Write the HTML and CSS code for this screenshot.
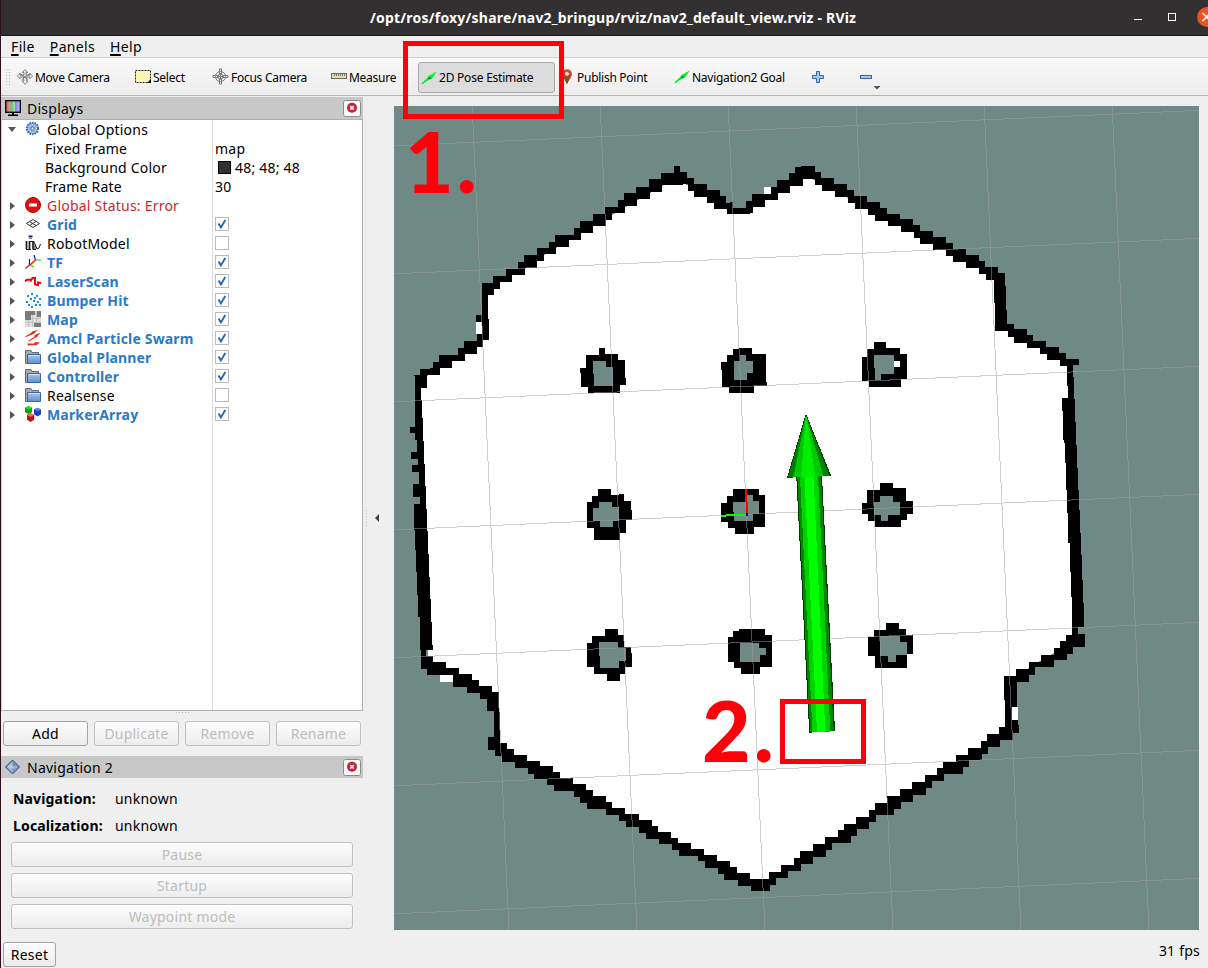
FILE: index.html
```html
<!DOCTYPE html>
<html lang="en">
<head>
<meta charset="utf-8">
<title>RViz</title>
<link rel="stylesheet" href="styles.css">
</head>
<body>
<svg class="defs" width="0" height="0">
  <defs>
    <linearGradient id="scr" x1="0" x2="1" y1="0" y2="0"><stop offset="0" stop-color="#c4544f"/><stop offset=".3" stop-color="#d9a59d"/><stop offset=".35" stop-color="#5cc26a"/><stop offset=".62" stop-color="#a8dcae"/><stop offset=".68" stop-color="#7d7dea"/><stop offset="1" stop-color="#c9c9f8"/></linearGradient>
    <linearGradient id="fold" x1="0" x2="0" y1="0" y2="1"><stop offset="0" stop-color="#a9c6ea"/><stop offset="1" stop-color="#5e92cf"/></linearGradient>
    <linearGradient id="pin" x1="0" x2="0" y1="0" y2="1"><stop offset="0" stop-color="#f0502e"/><stop offset="1" stop-color="#6b3a22"/></linearGradient>
    <symbol id="i-folder" viewBox="0 0 16 16"><path d="M.5 14.500V1.500h5.500l1 2h6.500v11z" fill="#a8a8a8" stroke="#6b6b6b"/><path d="M2.500 5.500h13v9h-13z" fill="url(#fold)" stroke="#3465a4"/><path d="M3.500 6.500h11" stroke="#d3e3f6"/></symbol>
    <symbol id="i-check" viewBox="0 0 14 14"><rect x=".5" y=".5" width="13" height="13" fill="#fff" stroke="#bbb"/><path d="M3.600 6.500 5.900 10.400 10.300 3" fill="none" stroke="#2a66ad" stroke-width="1.900"/></symbol>
    <symbol id="i-box" viewBox="0 0 14 14"><rect x=".5" y=".5" width="13" height="13" fill="#fff" stroke="#bbb"/></symbol>
    <symbol id="i-arrow" viewBox="0 0 16 14"><path d="M.3 12.600 6.500 6.800 7 5.300 15.800.6 11 7.600 8.500 8.300 1.300 13.200z" fill="#00f02c"/><path d="M6.500 7l4-.8-2 2.200z" fill="#087a1c"/></symbol>
    <symbol id="i-close" viewBox="0 0 18 17"><rect x=".5" y=".5" width="17" height="16" rx="2" fill="#fafafa" stroke="#8c8c8c"/><circle cx="9" cy="7.800" r="5" fill="#c81e3a"/><path d="M7.200 6 10.800 9.600M10.800 6 7.200 9.600" stroke="#fff" stroke-width="1.500"/></symbol>
  </defs>
</svg>
<div class="window">
  <header class="titlebar">
    <span class="title">/opt/ros/foxy/share/nav2_bringup/rviz/nav2_default_view.rviz - RViz</span>
    <svg class="controls" width="80" height="36"><path d="M6 19.500h8" stroke="#fff"/><rect x="40.500" y="13.500" width="7" height="7" fill="none" stroke="#fff"/><circle cx="79" cy="17" r="10" fill="#e95420"/><path d="M74.500 13 82.500 21M82.500 13 74.500 21" stroke="#fff" stroke-width="1.600"/></svg>
  </header>
  <nav class="menubar"><span><u>F</u>ile</span><span><u>P</u>anels</span><span><u>H</u>elp</span></nav>
  <div class="toolbar">
    <svg class="grip" width="5" height="18"><path d="M.5 1v17M3.500 1v17" stroke="#b5b5b5" stroke-dasharray="1 2"/></svg>
    <div class="tool w-move"><svg width="16" height="16" viewBox="0 0 16 16" fill="#f5f5f5" stroke="#6e6e6e" stroke-width=".9"><path d="M8 .7 10.800 3.400H9v2.800h4V4.500L15.600 7 13 9.600V8H9.300v4H11L8 15.300 5 12h1.700V8H3v1.600L.4 7 3 4.500v1.700h4V3.400H5.200z"/><path d="M3 4.500 8 8 13 4.500M4.500 11 8 8l3.500 3" fill="none"/></svg><span>Move Camera</span></div>
    <div class="tool w-select"><svg width="16" height="14" viewBox="0 0 16 14"><rect x=".5" y=".5" width="15" height="12" fill="#fdf3b4" stroke="#222" stroke-dasharray="2 1"/><path d="M16 9v4h-4z"/></svg><span>Select</span></div>
    <div class="tool w-focus"><svg width="17" height="17" viewBox="0 0 17 17" fill="none" stroke="#777" stroke-width="1"><circle cx="8.500" cy="8.500" r="5"/><circle cx="8.500" cy="8.500" r="2.500"/><path d="M7.500 1h2v5h-2zM7.500 11h2v5h-2zM1 7.500h5v2H1zM11 7.500h5v2h-5zM8.500 6v5M6 8.500h5"/></svg><span>Focus Camera</span></div>
    <div class="tool w-measure"><svg width="16" height="7" viewBox="0 0 16 7"><rect x=".5" y=".5" width="15" height="5" fill="#e8dca0" stroke="#6e6a58"/><path d="M3.500 1v2M5.500 1v2M7.500 1v2M9.500 1v2M11.500 1v2M13.500 1v2" stroke="#777"/></svg><span>Measure</span></div>
    <div class="tool active"><svg width="16" height="14"><use href="#i-arrow"/></svg><span>2D Pose Estimate</span></div>
    <div class="tool w-point"><svg width="16" height="16" viewBox="0 0 16 16"><path d="M8 .3C4.500.3 3 2.800 3 5.200 3 8 6.500 10.500 8 15.700 9.500 10.500 13 8 13 5.200 13 2.800 11.500.3 8 .3z" fill="url(#pin)"/><circle cx="8" cy="4.800" r="1.900" fill="#fbeee8"/></svg><span>Publish Point</span></div>
    <div class="tool w-goal"><svg width="16" height="14"><use href="#i-arrow"/></svg><span>Navigation2 Goal</span></div>
    <svg class="plus" width="12" height="12"><path d="M4.500.5h3v4h4v3h-4v4h-3v-4h-4v-3h4z" fill="#a9c6ea" stroke="#3465a4"/></svg>
    <svg class="minus" width="20" height="26"><rect x=".5" y="11.500" width="11" height="3" fill="#a9c6ea" stroke="#3465a4"/><path d="M13.500 22h7l-3.500 3.500z" fill="#555"/></svg>
  </div>
  <div class="main">
    <aside class="dock">
      <div class="dock-head"><svg width="16" height="17" viewBox="0 0 16 17"><rect x=".7" y=".7" width="14.600" height="11.600" fill="url(#scr)" stroke="#111" stroke-width="1.400"/><path d="M7 12h2v2.500H7zM3 14.500h10v1.500H3z"/></svg><span>Displays</span><svg class="x" width="18" height="17"><use href="#i-close"/></svg></div>
      <div class="tree">
        <div class="row open"><i></i><svg width="16" height="16" viewBox="0 0 16 16"><circle cx="7.500" cy="7.500" r="5.600" fill="#8fb4e3" stroke="#3f71b2" stroke-width="2.200" stroke-dasharray="1.700 .8"/><circle cx="7.500" cy="7.500" r="4" fill="none" stroke="#dce9f8" stroke-dasharray="1 1"/><circle cx="7.500" cy="7.500" r="1.500" fill="#fff" stroke="#3465a4"/></svg><span class="name">Global Options</span></div>
        <div class="row sub"><span class="name">Fixed Frame</span><span class="val">map</span></div>
        <div class="row sub"><span class="name">Background Color</span><span class="val"><b class="swatch"></b>48; 48; 48</span></div>
        <div class="row sub"><span class="name">Frame Rate</span><span class="val">30</span></div>
        <div class="row error"><i></i><svg width="16" height="16" viewBox="0 0 16 16"><circle cx="8" cy="8" r="7.500" fill="#e01010" stroke="#a30808"/><rect x="4" y="6.500" width="8" height="3" fill="#fff"/></svg><span class="name">Global Status: Error</span></div>
        <div class="row on"><i></i><svg width="16" height="16" viewBox="0 0 16 16" fill="none" stroke="#333"><path d="M1.500 7.500 8 3.500l6.500 4L8 11.500zM4.500 5.500 11 9.500M11 5.500 4.500 9.500"/></svg><span class="name">Grid</span><svg class="val" width="14" height="14"><use href="#i-check"/></svg></div>
        <div class="row"><i></i><svg width="16" height="16" viewBox="0 0 16 16" fill="none" stroke="#1c1c1c"><path d="M3.500 1.500h4" stroke="#24247a" stroke-width="2"/><path d="M4 3.500h3" stroke="#888"/><path d="M1.500 6v8M4.500 6v9M8 6v8" stroke-width="1.700"/><path d="M4 6.500h5l1.500 4M10 9.500v5M10.500 10l1.500 4 2-1 1.500-4M1 14.500h5M7.500 14.500h3.500"/></svg><span class="name">RobotModel</span><svg class="val" width="14" height="14"><use href="#i-box"/></svg></div>
        <div class="row on"><i></i><svg width="16" height="16" viewBox="0 0 16 16" fill="none"><path d="M4.500 11 .5 14.500M10.500 6 5 11" stroke="#e01010" stroke-width="1.200"/><path d="M4.500 11V5M10.500 6 9 1" stroke="#1010e8" stroke-width="1.200"/><path d="M4.500 11 9 13M10.500 6h5.500" stroke="#08dc08" stroke-width="1.200"/><path d="M10 7.500 6 11.500" stroke="#eda30e"/></svg><span class="name">TF</span><svg class="val" width="14" height="14"><use href="#i-check"/></svg></div>
        <div class="row on"><i></i><svg width="16" height="16" viewBox="0 0 16 16"><path d="M0 8.500 1.500 7 5 6.500l1 1L7.500 5H10v6.500l3 .5V9.500l3 .500" fill="none" stroke="red" stroke-width="2"/></svg><span class="name">LaserScan</span><svg class="val" width="14" height="14"><use href="#i-check"/></svg></div>
        <div class="row on"><i></i><svg width="16" height="16" viewBox="0 0 16 16" fill="#168ef0"><path d="M6 1h2v2H6zM2 3h2v2H2zM11 3h2v2h-2zM5 6h2v2H5zM9 5h2v2H9zM14 6h2v2h-2zM1 9h2v2H1zM8 8h2v2H8zM12 9h2v2h-2zM3 12h2v2H3zM6 14h2v2H6zM10 12h2v2h-2zM14 12h2v2h-2z"/></svg><span class="name">Bumper Hit</span><svg class="val" width="14" height="14"><use href="#i-check"/></svg></div>
        <div class="row on"><i></i><svg width="16" height="16" viewBox="0 0 16 16"><path d="M0 0h16v16H0z" fill="#ddd"/><path d="M3.500 0v16M7.500 0v16M11.500 0v16M0 3.500h16M0 7.500h16M0 11.500h16" stroke="#b8b8b8" stroke-width=".7"/><path d="M0 0h10v4H6v5H0zM12 0h4v6h-4zM9 12h7v4H9z" fill="#7a7a7a"/></svg><span class="name">Map</span><svg class="val" width="14" height="14"><use href="#i-check"/></svg></div>
        <div class="row on"><i></i><svg width="16" height="16" viewBox="0 0 16 16" fill="#f02a18"><path d="M0 6.500 6 3 7 1.500 13 0 8.500 4 1 7zM3 11 9 7l1-2 5.500-2.500L12 7 9.500 8 4 11.500zM2 13.500 9 13.500l1.500-1.500L15 12.500l-4 3-2-.5-6 .5z"/></svg><span class="name">Amcl Particle Swarm</span><svg class="val" width="14" height="14"><use href="#i-check"/></svg></div>
        <div class="row on"><i></i><svg width="16" height="16"><use href="#i-folder"/></svg><span class="name">Global Planner</span><svg class="val" width="14" height="14"><use href="#i-check"/></svg></div>
        <div class="row on"><i></i><svg width="16" height="16"><use href="#i-folder"/></svg><span class="name">Controller</span><svg class="val" width="14" height="14"><use href="#i-check"/></svg></div>
        <div class="row"><i></i><svg width="16" height="16"><use href="#i-folder"/></svg><span class="name">Realsense</span><svg class="val" width="14" height="14"><use href="#i-box"/></svg></div>
        <div class="row on"><i></i><svg width="16" height="16" viewBox="0 0 16 16"><path d="M0 1.800 3.500 0 7 1.800v4.400L3.500 8 0 6.200z" fill="#07a507"/><path d="M0 1.800 3.500 0 7 1.800 3.500 3.600z" fill="#2be02b"/><path d="M9 3.500 12.500 1.700 16 3.500v4.700L12.500 10.500 9 8.200z" fill="#1d3fc0"/><path d="M9 3.500 12.500 1.700 16 3.500 12.500 5.300z" fill="#5b80f2"/><path d="M2 9 5.500 7.300 9.200 9v4.700L5.500 16 2 13.700z" fill="#c01212"/><path d="M2 9 5.500 7.300 9.200 9 5.500 11z" fill="#f26a5e"/></svg><span class="name">MarkerArray</span><svg class="val" width="14" height="14"><use href="#i-check"/></svg></div>
      </div>
      <div class="split"></div>
      <div class="actions"><button class="enabled">Add</button><button>Duplicate</button><button>Remove</button><button>Rename</button></div>
      <div class="split second"></div>
      <div class="dock-head"><svg width="16" height="17" viewBox="0 0 16 17"><path d="M7.500 1 14.500 8 7.500 15 .5 8z" fill="#7a92c2" stroke="#39496f"/><path d="M7.500 2.500V14L2 8z" fill="#a9bbdc"/><path d="M3 8h9M5 6l5 4" stroke="#d8e0f0" stroke-width=".7"/></svg><span>Navigation 2</span><svg class="x" width="18" height="17"><use href="#i-close"/></svg></div>
      <div class="status"><b>Navigation:</b><span>unknown</span><b>Localization:</b><span>unknown</span></div>
      <div class="stack"><button>Pause</button><button>Startup</button><button>Waypoint mode</button></div>
    </aside>
    <div class="collapse"><svg width="14" height="18"><path d="M.5 1v17" stroke="#bdbdbd" stroke-dasharray="1 2"/><path d="M13 5v8L9 9z" fill="#444"/></svg></div>
    <svg class="view" width="805" height="824" viewBox="394 106 805 824" shape-rendering="crispEdges">
      <rect x="394" y="106" width="805" height="824" fill="#6f8984"/>
      <!-- free space -->
      <path fill="#fff" d="M420 380 483 343 485 290 600 222 676 178 729 211 745 211 762 199 804 175 996 275 1000 326 1072 363 1072 450 1078 638 1009 680 1009 735 760 885 500 750 494 700 428 662z"/>
      <path fill="#fff" d="M476 321.700h6v12.600h-6zM764 187h7v7h-7zM440 675h14v7h-14zM1012 707.300h6v12.700h-6z"/>
      <!-- occupied cells -->
      <g>
        <path transform="translate(400 140) scale(.33333)" d="M45 900V708H42V706H60V687H90V683H99V665H117V645H174V625H192V603H231V583H228V582H246V545H228V525H245V430H279V408H318V387H354V366H372V345H411V324H447V306H465V285H522V264H540V243H579V222H615V201H654V180H672V159H708V140H747V118H783V98H823V77H840V96H861V113H882V131H921V149H960V167H978V188H999V204H1050V222H981V206H942V188H921V170H882V152H864V133H849V135H786V156H750V176H711V197H675V218H636V239H618V258H579V279H543V300H507V320H468V342H432V362H411V384H375V404H336V426H300V446H282V465H264V537H267V600H249V620H231V641H195V662H156V683H120V704H81V743H63V780H66V835H69V900z"/>
        <path transform="translate(730 140) scale(.33333)" d="M0 186H9V204H48V183H66V162H123V141H141V120H177V99H195V81H213V78H255V96H273V114H312V132H351V150H372V168H411V186H450V204H471V222H510V237H549V255H570V273H609V291H648V309H669V327H708V345H747V363H765V381H804V399H825V438H828V510H831V552H852V567H891V586H909V603H948V621H987V639H1008V657H1047V676H1029V711H1032V777H1035V847H1038V900H999V810H996V774H1014V738H1011V678H990V660H951V641H930V624H891V608H852V590H834V572H795V490H792V420H768V402H747V384H708V366H669V348H648V330H609V312H570V293H552V276H513V258H474V242H435V224H414V206H375V188H354V170H315V152H276V134H255V117H219V138H180V159H144V180H105V201H69V219H0z"/>
        <path transform="translate(400 400) scale(.33333)" d="M45 0H66V55H69V124H72V192H75V258H78V327H81V394H84V463H87V530H90V598H93V667H96V735H99V750H60V650H54V585H51V515H48V450H45V390H42V312H60V290H39V252H57V215H36V195H54V177H33V157H51V98H30V81H48V15H45z"/>
        <path transform="translate(730 400) scale(.33333)" d="M996 0H1035V67H1038V135H1041V205H1044V270H1047V330H1050V400H1053V465H1056V540H1059V610H1062V682H1044V702H1065V741H1029V762H1011V780H972V801H915V825H897V846H861V900H822V828H858V807H897V786H933V765H972V744H990V723H1008V705H1026V590H1023V515H1020V430H1014V340H1011V270H1008V190H1005V130H1002V65H999z"/>
        <path transform="translate(400 640) scale(.33333)" d="M60 0H96V15H99V30H78V49H99V67H138V84H177V102H216V120H237V138H276V156H297V215H300V310H321V328H342V345H381V363H420V379H459V397H480V415H519V433H558V451H579V469H618V487H636V504H675V522H717V540H756V558H774V576H813V594H834V610H873V628H912V646H951V664H990V682H1011V700H1050V717H1110V753H1053V738H1014V720H972V702H954V684H915V664H894V649H837V630H816V613H777V597H738V579H717V561H678V543H657V525H618V508H561V489H540V471H522V453H462V436H441V418H402V402H384V384H345V366H306V348H285V329H264V291H282V213H261V177H240V159H201V141H159V105H81V88H63V60z"/>
        <path transform="translate(740 640) scale(.33333)" d="M792 108H831V201H816V240H834V255H837V278H819V300H780V320H744V341H726V360H687V381H669V402H612V423H576V444H558V465H519V486H483V507H462V525H408V546H387V567H351V588H333V609H276V630H258V651H219V672H183V693H144V714H108V735H90V753H33V738H0V699H30V717H87V696H123V675H162V654H180V633H219V612H255V591H294V570H312V552H348V531H387V510H405V489H441V468H480V447H516V426H555V405H591V384H609V366H648V345H684V324H723V303H741V282H777V262H795V180H792z"/>
      </g>
      <!-- pillars -->
      <g transform="translate(560 330) scale(.33333)">
        <path d="M117 54H135V72H174V90H195V145H198V165H180V188H84V170H63V130H60V114H78V75H117zM537 54H576V72H618V156H621V168H582V190H507V172H486V120H483V96H501V75H519V57H537zM942 36H978V54H1020V72H1041V147H1023V170H927V153H906V80H921V57H942zM114 477H153V495H177V492H192V513H213V540H216V570H198V609H180V630H102V594H81V516H96V498H114zM519 477H597V495H615V590H582V612H525V594H504V575H483V519H501V498H519zM960 459H999V474H1038V513H1059V552H1041V570H1023V591H945V573H924V552H906V519H921V480H960zM135 897H174V915H192V952H213V970H216V1010H195V1032H180V1053H141V1033H102V1012H81V939H96V918H135zM537 897H615V915H636V1012H600V1033H543V1015H522V997H504V921H519V903H537zM978 879H1017V897H1038V915H1059V972H1041V1014H945V978H924V921H942V900H978z"/>
        <path fill="#6f8984" d="M99 93H138V111H159V168H102zM540 75H558V93H579V130H561V150H522V93H540zM942 75H1002V132H963V150H945zM117 516H156V531H177V573H159V591H120V573H99V534H117zM519 516H561V495H579V513H597V552H579V573H522zM960 498H999V516H1020V555H984V573H963V555H942V516H960zM117 936H174V955H198V993H177V1014H120zM540 939H597V954H618V975H600V996H540zM960 918H1020V936H1041V975H1008V996H984V978H960z"/>
        <path fill="#fff" d="M1002 93h18v18h-18z"/>
      </g>
      <!-- metric grid -->
      <path stroke="#a0a0a4" stroke-opacity=".5" fill="none" d="M394 145.800 1199 110.400M394 273.800 1199 238.400M394 401.800 1199 366.400M394 529.800 1199 494.400M394 657.800 1199 622.400M394 785.800 1199 750.400M394 913.800 1199 878.400M472.200 106 508.900 930M600.200 106 636.900 930M728.200 106 764.900 930M856.200 106 892.900 930M984.200 106 1020.900 930M1112.200 106 1148.900 930"/>
      <!-- origin axes -->
      <path d="M746 489.500 747 514" stroke="red" stroke-width="2"/><path d="M721 515.700 746 514.700" stroke="#0f0" stroke-width="2"/><path d="M746 513h2v3h-2z" fill="#00f"/>
      <!-- pose arrow -->
      <path d="M796.300 477 822 476 835 731 809.200 732.700z" fill="#003c00"/>
      <path d="M797.300 477 821 476 833.700 731 810.200 732.500z" fill="#008800"/>
      <path d="M800 477 818 476 830.300 731.800 812.500 732z" fill="#00d200"/>
      <path d="M804.500 477 813.500 476 825.300 731.800 817 732z" fill="#00ff00"/>
      <path d="M805.700 414 806.300 414 831 475.700 787 477.800z" fill="#003c00"/>
      <path d="M806 415 829.700 475.800 788.200 477.500z" fill="#008000"/>
      <path d="M806 415 823.500 476.200 793.300 477.500z" fill="#00c800"/>
      <path d="M806 415 815.500 477 801 477.300z" fill="#00ee00"/>
    </svg>
  </div>
  <footer class="statusbar"><button class="enabled">Reset</button><span>31 fps</span></footer>
  <div class="mark m1"></div><div class="mark m2"></div>
  <div class="num n1">1.</div><div class="num n2">2.</div>
</div>
</body>
</html>
```
FILE: styles.css
```css
* { box-sizing: border-box; }
body { margin: 0; font: 14px/19px "Noto Sans", "Open Sans", sans-serif; letter-spacing: .22px; color: #000; }
svg { display: block; flex: none; }
.defs { position: absolute; }
.window { position: relative; width: 1208px; height: 968px; overflow: hidden; display: flex; flex-direction: column; background: #efefef; border-left: 1px solid #2c0f1f; }
.titlebar { height: 36px; flex: none; background: #333031; border-bottom: 1px solid #1c1a1b; display: flex; align-items: center; justify-content: flex-end; }
.title { color: #fff; font-weight: 700; font-size: 14px; letter-spacing: .21px; width: 487px; white-space: nowrap; margin-right: 271px; }
.menubar { height: 22px; flex: none; border-bottom: 1px solid #d0d0d0; padding-left: 10px; display: flex; gap: 15px; line-height: 22px; letter-spacing: .35px; }
.menubar u { text-underline-offset: 2px; text-decoration-thickness: 2px; text-decoration-skip-ink: none; }
.toolbar { height: 38px; flex: none; background: linear-gradient(#f9f9f9, #ededed); border-bottom: 1px solid #b4b4b4; display: flex; align-items: center; }
.grip { margin: 0 6px 0 5px; }
.tool { display: flex; align-items: center; gap: 2px; font-size: 12px; letter-spacing: -.27px; white-space: nowrap; height: 31px; position: relative; }
.tool span { padding-top: 2px; }
.w-move { width: 118px; }
.w-select { width: 77px; }
.w-focus { width: 119px; }
.w-measure { width: 87px; }
.active { width: 137px; border: 1px solid #a8a8a8; border-radius: 3px; background: #dcdcdc; padding-left: 2px; margin-top: 2px; letter-spacing: -.22px; }
.active span { padding-top: 0; }
.w-point { width: 115px; margin-left: 4px; }
.w-goal { width: 138px; }
.plus { margin-right: 36px; }
.main { height: 838px; flex: none; display: flex; }
.dock { width: 362px; display: flex; flex-direction: column; padding-top: 1px; }
.dock-head { height: 22px; flex: none; background: #c8c8c8; display: flex; align-items: center; padding: 0 2px 0 4px; gap: 6px; letter-spacing: .25px; }
.dock-head .x { margin-left: auto; }
.tree { height: 592px; flex: none; background: #fff linear-gradient(#dcdcdc, #dcdcdc) 210px 0 / 1px 100% no-repeat; border: 1px solid #b0b0b0; border-left-color: #ccc; }
.row { display: grid; grid-template-columns: 23px 21px 168px 1fr; height: 19px; align-items: center; white-space: nowrap; }
.row i { margin-left: 8px; width: 0; height: 0; border: 4px solid transparent; border-left: 5px solid #555; border-right: 0; }
.row.open i { margin-left: 6px; border: 4px solid transparent; border-top: 5px solid #555; border-bottom: 0; }
.row > svg:not(.val) { margin-top: -1px; }
.row.sub .name { grid-column: 1 / 4; padding-left: 43px; }
.row .name { padding-left: 1px; }
.row > .val { margin-left: 1px; display: flex; align-items: center; }
.row > svg.val { margin-top: -2px; }
.row.on .name { color: #2a7ac8; font-weight: 700; letter-spacing: .17px; }
.row.error .name { color: #c42a2e; }
.swatch { width: 13px; height: 13px; background: #303030; border: 1px solid #000; margin: 0 4px 0 3px; }
.split { height: 10px; flex: none; background: radial-gradient(circle, #bbb 1px, transparent 1px) 174px 0 / 3px 3px; clip-path: inset(0 172px 7px 173px); }
.split.second { height: 8px; margin-top: 2px; }
button { font: inherit; letter-spacing: inherit; color: #bdbdbd; padding: 0; border: 1px solid #c0c0c0; border-radius: 3px; background: linear-gradient(#fdfdfd, #ececec); height: 25px; }
button.enabled { color: #000; border-color: #a2a2a2; }
.actions { display: grid; grid-template-columns: repeat(4, 85px); gap: 6px; padding-left: 2px; height: 25px; flex: none; }
.status { display: grid; grid-template-columns: 102px 1fr; row-gap: 8px; padding: 11px 0 0 12px; }
.status b { letter-spacing: .15px; }
.stack { display: flex; flex-direction: column; gap: 6px; padding: 7px 10px 0; }
.collapse { width: 31px; padding: 413px 0 0 3px; }
.view { margin-top: 10px; }
.statusbar { flex: 1; display: flex; justify-content: space-between; padding: 8px 8px 0 2px; }
.statusbar button { width: 53px; }
.statusbar span { line-height: 18px; }
.mark { position: absolute; border: 5px solid #ff000a; }
.m1 { left: 402px; top: 41px; width: 161px; height: 78px; }
.m2 { left: 779px; top: 699px; width: 86px; height: 65px; }
.num { position: absolute; font: 900 84px/84px Lato, sans-serif; letter-spacing: 3px; color: #ff000a; }
.n1 { left: 404px; top: 119px; }
.n2 { left: 701px; top: 688px; }
```
